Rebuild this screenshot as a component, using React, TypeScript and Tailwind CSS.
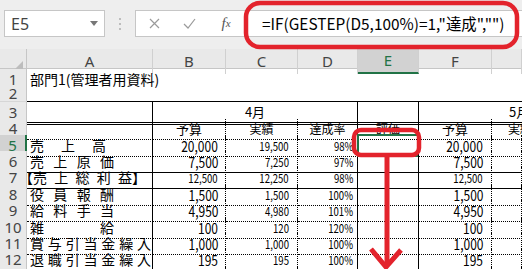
import React from 'react';

const JP = "font-['Noto_Sans_CJK_JP',sans-serif]";
const UI = "font-['Noto_Sans','Noto_Sans_CJK_JP',sans-serif]";

// cell borders, one arbitrary property per side so styles never clash
const RB = {
  solid: '[border-right:1px_solid_black]',
  dot: '[border-right:1px_dotted_black]',
  none: '',
};
const BB = {
  solid: '[border-bottom:1px_solid_black]',
  dot: '[border-bottom:1px_dotted_black]',
  double: '[border-bottom:3px_double_black]',
  none: '',
};

const GRID = 'grid grid-cols-[27px_126px_73px_72px_60px_61px_73px_1fr]';

type Row = {
  n: number;
  h: string;
  label: string[];
  lw: string;
  lcls?: string;
  b: string;
  c: string;
  d: string;
  f: string;
  bottom: keyof typeof BB;
  smallB?: boolean;
};

const rows: Row[] = [
  { n: 5, h: 'h-[16px]', label: ['売', '上', '高'], lw: 'w-[76px]', b: '20,000', c: '19,500', d: '98%', f: '20,000', bottom: 'dot' },
  { n: 6, h: 'h-[16px]', label: ['売', '上', '原', '価'], lw: 'w-[84px]', b: '7,500', c: '7,250', d: '97%', f: '7,500', bottom: 'solid' },
  {
    n: 7,
    h: 'h-[17px]',
    label: ['【売', '上', '総', '利', '益】'],
    lw: 'w-[113px]',
    lcls: '-ml-[4px]',
    b: '12,500',
    c: '12,250',
    d: '98%',
    f: '12,500',
    bottom: 'solid',
    smallB: true,
  },
  { n: 8, h: 'h-[16px]', label: ['役', '員', '報', '酬'], lw: 'w-[84px]', b: '1,500', c: '1,500', d: '100%', f: '1,500', bottom: 'dot' },
  { n: 9, h: 'h-[17px]', label: ['給', '料', '手', '当'], lw: 'w-[84px]', b: '4,950', c: '4,980', d: '101%', f: '4,950', bottom: 'dot' },
  { n: 10, h: 'h-[16px]', label: ['雑', '給'], lw: 'w-[84px]', b: '100', c: '120', d: '120%', f: '100', bottom: 'dot' },
  { n: 11, h: 'h-[16px]', label: ['賞', '与', '引', '当', '金', '繰', '入'], lw: 'w-[121px]', b: '1,000', c: '1,000', d: '100%', f: '1,000', bottom: 'dot' },
  { n: 12, h: 'h-[17px]', label: ['退', '職', '引', '当', '金', '繰', '入'], lw: 'w-[121px]', b: '195', c: '195', d: '100%', f: '195', bottom: 'dot' },
  { n: 13, h: 'h-[16px]', label: ['貸', '倒', '引', '当', '金', '繰', '入'], lw: 'w-[121px]', b: '75', c: '75', d: '100%', f: '75', bottom: 'dot' },
];

function RowHead({ n, active }: { n: number | string; active?: boolean }) {
  return (
    <div
      className={
        active
          ? `flex items-center justify-center bg-[#d2d2d2] text-[15px] leading-none text-[#217346] [border-right:2px_solid_#217346] [border-bottom:1px_solid_#d6d6d6] ${UI}`
          : `flex items-center justify-center bg-[#e9e9e9] text-[15px] leading-none text-[#444] [border-right:1px_solid_#c6c6c6] [border-bottom:1px_solid_#d6d6d6] ${UI}`
      }
    >
      {n}
    </div>
  );
}

function Num({ v, big }: { v: string; big?: boolean }) {
  return (
    <span className={big ? 'inline-block origin-right scale-x-80 text-[15px] leading-none' : 'inline-block origin-right scale-x-80 text-[12px] leading-none'}>
      {v}
    </span>
  );
}

function FormulaBar() {
  return (
    <div className={`flex h-[49px] items-start bg-[#eeeeee] pt-[10px] ${UI}`}>
      <div className="ml-[4px] flex h-[27px] w-[101px] items-center justify-between border border-[#c6c6c6] bg-white pr-[6px] pl-[6px]">
        <span className="text-[16px] text-[#444]">E5</span>
        <svg width="8" height="5" viewBox="0 0 8 5">
          <path d="M0 0h8L4 5z" fill="#777" />
        </svg>
      </div>
      <div className="flex w-[30px] flex-col items-center gap-[3px] pt-[8px]">
        <span className="h-[2px] w-[2px] bg-[#bdbdbd]" />
        <span className="h-[2px] w-[2px] bg-[#bdbdbd]" />
        <span className="h-[2px] w-[2px] bg-[#bdbdbd]" />
      </div>
      <div className="flex h-[27px] flex-1 items-center border border-r-0 border-[#c6c6c6] bg-white">
        <div className="flex w-[36px] justify-center">
          <svg width="11" height="11" viewBox="0 0 11 11">
            <path d="M1 1l9 9M10 1l-9 9" stroke="#9a9a9a" strokeWidth="1.2" />
          </svg>
        </div>
        <div className="flex w-[34px] justify-center">
          <svg width="13" height="11" viewBox="0 0 13 11">
            <path d="M1 6l4 4 7-9" stroke="#9a9a9a" strokeWidth="1.2" fill="none" />
          </svg>
        </div>
        <div className="flex w-[40px] justify-center font-['Liberation_Serif',serif] text-[15px] text-[#555] italic">
          f<span className="mt-[3px] text-[11px]">x</span>
        </div>
        <div className={`pl-[16px] text-[15.4px] whitespace-nowrap text-black ${JP}`}>
          {'=IF(GESTEP(D5,100%)=1,"達成","")'}
        </div>
      </div>
    </div>
  );
}

function ColHeader() {
  const cell = `flex items-center justify-center text-[15px] text-[#444] [border-right:1px_solid_#d0d0d0] ${UI}`;
  return (
    <div className={`${GRID} h-[20px] bg-[#e9e9e9] [border-bottom:1px_solid_#c6c6c6]`}>
      <div className="flex items-end justify-end pr-[3px] pb-[3px] [border-right:1px_solid_#c6c6c6]">
        <svg width="10" height="10" viewBox="0 0 10 10">
          <path d="M10 0v10H0z" fill="#bdbdbd" />
        </svg>
      </div>
      <div className={cell}>A</div>
      <div className={cell}>B</div>
      <div className={cell}>C</div>
      <div className={cell}>D</div>
      <div
        className={`flex items-center justify-center bg-[#d2d2d2] text-[15px] text-[#217346] [border-right:1px_solid_#d0d0d0] [border-bottom:2px_solid_#217346] ${UI}`}
      >
        E
      </div>
      <div className={cell}>F</div>
      <div className={cell}></div>
    </div>
  );
}

function Annotations() {
  return (
    <svg className="pointer-events-none absolute top-0 left-0" width="522" height="269" viewBox="0 0 522 269">
      <rect x="246" y="3" width="271" height="44" rx="14" fill="none" stroke="#e3232c" strokeWidth="4.5" />
      <rect x="354" y="130" width="65" height="25" rx="7" fill="none" stroke="#e3232c" strokeWidth="4.5" />
      <path d="M387 157V264" stroke="#e3232c" strokeWidth="5" />
      <path d="M371 249l15 18 15-17" stroke="#e3232c" strokeWidth="5" fill="none" />
    </svg>
  );
}

export default function App() {
  return (
    <div className={`relative h-[269px] w-[522px] overflow-hidden bg-white text-black ${JP}`}>
      <FormulaBar />
      <ColHeader />

      {/* row 1 */}
      <div className={`${GRID} h-[16px]`}>
        <RowHead n={1} />
        <div className="col-span-7 flex items-center pl-[3px] text-[14px] whitespace-nowrap">部門1(管理者用資料)</div>
      </div>

      {/* row 2 */}
      <div className={`${GRID} h-[17px]`}>
        <RowHead n={2} />
        <div className={`col-span-7 ${BB.solid}`} />
      </div>

      {/* row 3 */}
      <div className={`${GRID} h-[17px]`}>
        <RowHead n={3} />
        <div className={`${RB.solid} ${BB.double}`} />
        <div className={`col-span-3 flex items-center justify-center text-[13px] ${RB.solid} ${BB.double}`}>4月</div>
        <div className={`${RB.solid} ${BB.double}`} />
        <div className={`col-span-2 flex items-center pl-[90px] text-[13px] whitespace-nowrap ${BB.double}`}>5月</div>
      </div>

      {/* row 4 */}
      <div className={`${GRID} h-[16px]`}>
        <RowHead n={4} />
        <div className={`${RB.solid} ${BB.dot}`} />
        <div className={`flex items-center justify-center text-[13px] ${RB.dot} ${BB.dot}`}>予算</div>
        <div className={`flex items-center justify-center text-[12px] ${RB.dot} ${BB.dot}`}>実績</div>
        <div className={`flex items-center justify-center text-[12px] ${RB.solid} ${BB.dot}`}>達成率</div>
        <div className={`flex items-center justify-center text-[12px] ${RB.solid} ${BB.dot}`}>評価</div>
        <div className={`flex items-center justify-center text-[13px] ${RB.dot} ${BB.dot}`}>予算</div>
        <div className={`flex items-center pl-[16px] text-[12px] whitespace-nowrap ${BB.dot}`}>実績</div>
      </div>

      {rows.map((r) => (
        <div key={r.n} className={`${GRID} ${r.h}`}>
          <RowHead n={r.n} active={r.n === 5} />
          <div className={`flex items-center pl-[3px] text-[14px] ${RB.solid} ${BB[r.bottom]}`}>
            <div className={`flex justify-between [font-feature-settings:"halt"] ${r.lw} ${r.lcls ?? ''}`}>
              {r.label.map((ch, i) => (
                <span key={i}>{ch}</span>
              ))}
            </div>
          </div>
          <div className={`flex items-center justify-end pr-[7px] ${RB.dot} ${BB[r.bottom]}`}>
            <Num v={r.b} big={!r.smallB} />
          </div>
          <div className={`flex items-center justify-end pr-[8px] ${RB.dot} ${BB[r.bottom]}`}>
            <Num v={r.c} />
          </div>
          <div className={`flex items-center justify-end pr-[4px] ${RB.solid} ${BB[r.bottom]}`}>
            <Num v={r.d} />
          </div>
          <div className={`relative ${RB.solid} ${BB[r.bottom]}`}>
            {r.n === 5 && <div className="absolute -inset-[1px] border-2 border-[#217346]" />}
          </div>
          <div className={`flex items-center justify-end pr-[8px] ${RB.dot} ${BB[r.bottom]}`}>
            <Num v={r.f} big={!r.smallB} />
          </div>
          <div className={`${RB.dot} ${BB[r.bottom]}`} />
        </div>
      ))}

      <Annotations />
    </div>
  );
}
